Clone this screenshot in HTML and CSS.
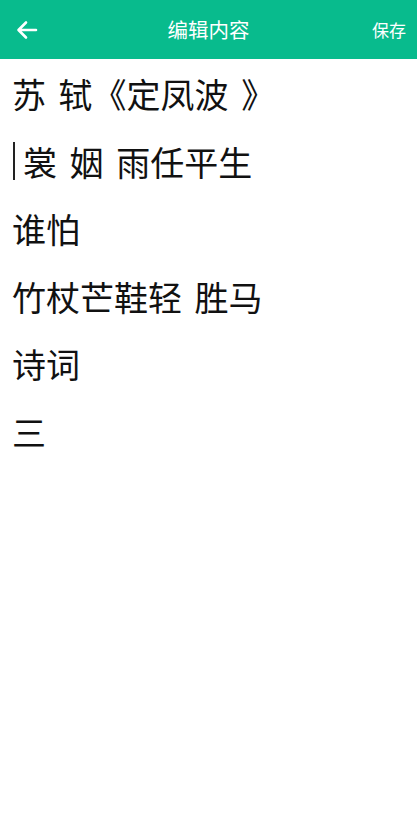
FILE: index.html
```html
<!DOCTYPE html>
<html lang="zh-CN">
<head>
<meta charset="utf-8">
<title>编辑内容</title>
<link rel="stylesheet" href="styles.css">
</head>
<body>
<header class="bar">
  <div class="back">
    <svg width="22" height="20" viewBox="0 0 22 20"><path d="M20 10H3M10 2.5L2.5 10 10 17.5" fill="none" stroke="#fff" stroke-width="2.6" stroke-linecap="round" stroke-linejoin="round"/></svg>
  </div>
  <div class="title">编辑内容</div>
  <div class="save">保存</div>
</header>
<main class="editor">
  <div class="line">苏 轼《定凤波 》</div>
  <div class="line"><span class="caret"></span>裳 姻 雨任平生</div>
  <div class="line">谁怕</div>
  <div class="line">竹杖芒鞋轻 胜马</div>
  <div class="line">诗词</div>
  <div class="line">三</div>
</main>
</body>
</html>
```
FILE: styles.css
```css
html, body {
  margin: 0;
  padding: 0;
  background: #fff;
  font-family: "Noto Sans CJK SC", "Noto Sans", sans-serif;
}
.bar {
  height: 59px;
  background: #08bb8d;
  display: flex;
  align-items: center;
  justify-content: space-between;
  padding: 0 11px 0 16px;
  color: #fff;
  position: relative;
}
.back {
  width: 40px;
  height: 22px;
  display: flex;
  align-items: center;
}
.title {
  position: absolute;
  left: 0;
  right: 0;
  text-align: center;
  font-size: 20.5px;
  line-height: 59px;
  pointer-events: none;
}
.save {
  font-size: 17px;
}
.editor {
  padding: 1px 0 0 12px;
}
.line {
  font-size: 34px;
  font-weight: 400;
  line-height: 67.5px;
  height: 67.5px;
  color: #111;
  white-space: pre;
  word-spacing: 5px;
  display: flex;
  align-items: center;
}
.caret {
  display: inline-block;
  width: 2px;
  height: 38px;
  background: #222;
  margin-right: 8px;
  margin-left: 1px;
}
```
